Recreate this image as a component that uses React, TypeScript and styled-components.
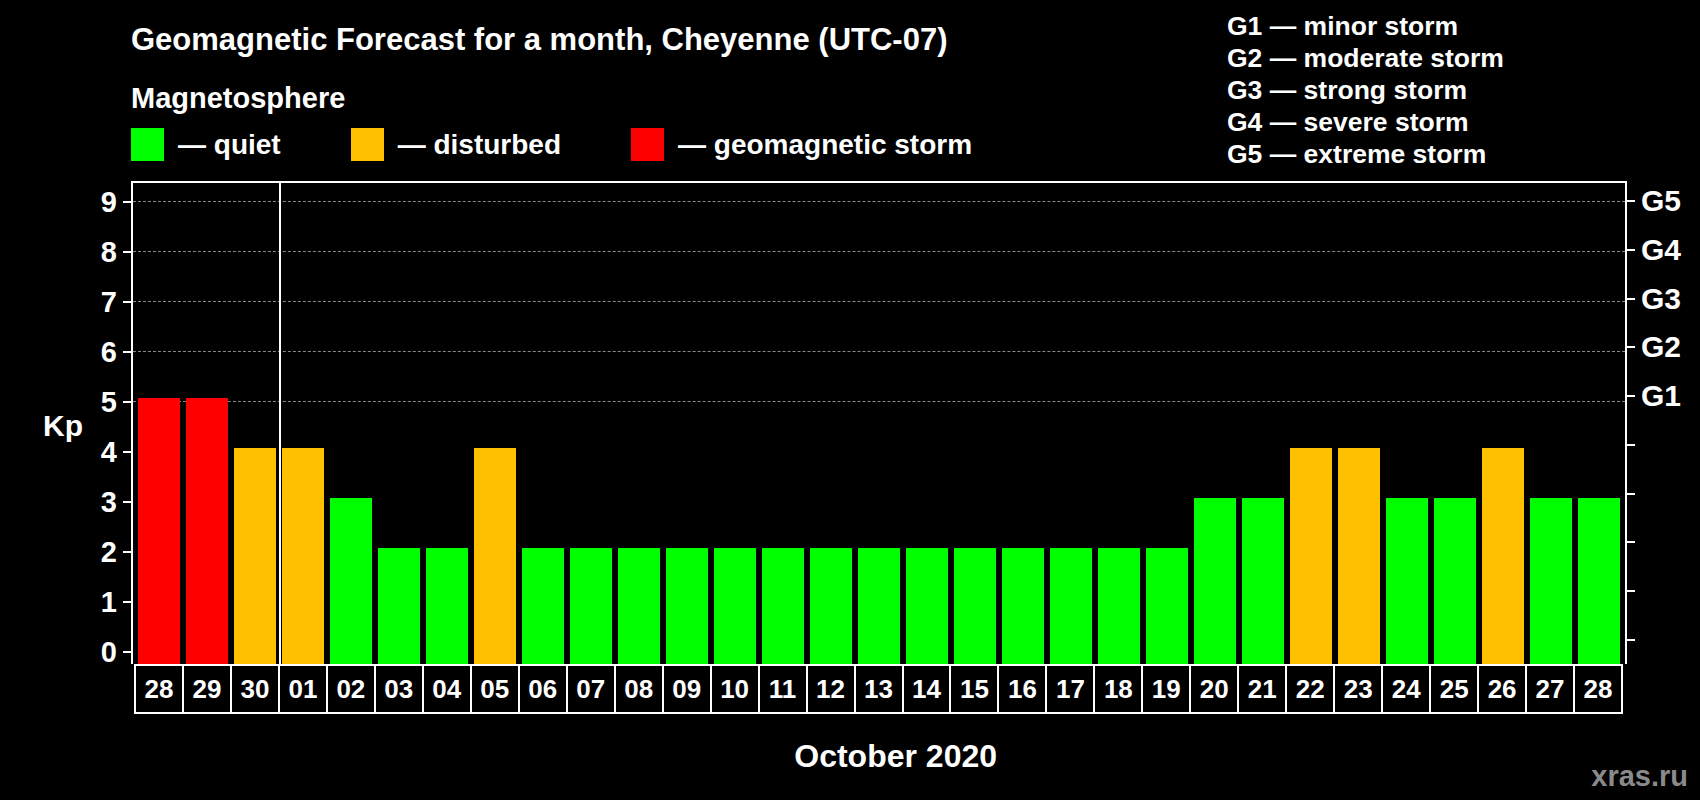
import styled, { createGlobalStyle } from "styled-components";

const GlobalStyle = createGlobalStyle`
  body {
    margin: 0;
    background: #000;
    font-family: "Liberation Sans", Arial, sans-serif;
    font-weight: 700;
    color: #fff;
  }
`;

const UNIT = 50;
const data: [string, number][] = [
  ["28", 5], ["29", 5], ["30", 4], ["01", 4], ["02", 3], ["03", 2], ["04", 2], ["05", 4],
  ["06", 2], ["07", 2], ["08", 2], ["09", 2], ["10", 2], ["11", 2], ["12", 2], ["13", 2],
  ["14", 2], ["15", 2], ["16", 2], ["17", 2], ["18", 2], ["19", 2], ["20", 3], ["21", 3],
  ["22", 4], ["23", 4], ["24", 3], ["25", 3], ["26", 4], ["27", 3], ["28", 3],
];

const colorFor = (kp: number) => (kp >= 5 ? "#ff0000" : kp === 4 ? "#ffc000" : "#00ff00");

const App = () => (
  <>
    <GlobalStyle />
    <Page>
      <Header>
        <HeadLeft>
          <Title>Geomagnetic Forecast for a month, Cheyenne (UTC-07)</Title>
          <Sub>Magnetosphere</Sub>
          <Legend>
            <LegendItem><Swatch $c="#00ff00" />— quiet</LegendItem>
            <LegendItem><Swatch $c="#ffc000" />— disturbed</LegendItem>
            <LegendItem><Swatch $c="#ff0000" />— geomagnetic storm</LegendItem>
          </Legend>
        </HeadLeft>
        <GList>
          <span>G1 — minor storm</span>
          <span>G2 — moderate storm</span>
          <span>G3 — strong storm</span>
          <span>G4 — severe storm</span>
          <span>G5 — extreme storm</span>
        </GList>
      </Header>
      <ChartRow>
        <LeftAxis>
          <KpLabel>Kp</KpLabel>
          <Ticks>
            {[9, 8, 7, 6, 5, 4, 3, 2, 1, 0].map((n) => (
              <TickRow key={n}><span>{n}</span><TickMark /></TickRow>
            ))}
          </Ticks>
        </LeftAxis>
        <Plot>
          <GridLayer>
            {[9, 8, 7, 6, 5].map((n) => (
              <GridLine key={n} style={{ top: 18 + (9 - n) * UNIT }} />
            ))}
          </GridLayer>
          <Divider />
          <Bars>
            {data.map(([d, kp], i) => (
              <Bar key={i} $c={colorFor(kp)} style={{ height: 16 + kp * UNIT }} />
            ))}
          </Bars>
        </Plot>
        <RightAxis>
          {["G5", "G4", "G3", "G2", "G1", "", "", "", "", ""].map((g, i) => (
            <TickRow key={i}><TickMark /><span>{g}</span></TickRow>
          ))}
        </RightAxis>
      </ChartRow>
      <Dates>
        {data.map(([d], i) => (
          <DateCell key={i}>{d}</DateCell>
        ))}
      </Dates>
      <Footer>
        <Month>October 2020</Month>
        <Brand>xras.ru</Brand>
      </Footer>
    </Page>
  </>
);

const Page = styled.div`
  width: 1700px;
  height: 800px;
  overflow: hidden;
  background: #000;
`;

const Header = styled.div`
  height: 181px;
  display: flex;
  justify-content: space-between;
  padding-left: 131px;
  box-sizing: border-box;
`;

const HeadLeft = styled.div`
  display: flex;
  flex-direction: column;
  padding-top: 22px;
`;

const Title = styled.div`
  font-size: 31px;
  line-height: 36px;
`;

const Sub = styled.div`
  font-size: 29px;
  line-height: 32px;
  margin-top: 24px;
`;

const Legend = styled.div`
  display: flex;
  gap: 70px;
  margin-top: 14px;
`;

const LegendItem = styled.div`
  display: flex;
  align-items: center;
  gap: 14px;
  font-size: 28px;
`;

const Swatch = styled.div<{ $c: string }>`
  width: 33px;
  height: 33px;
  background: ${(p) => p.$c};
`;

const GList = styled.div`
  width: 473px;
  display: flex;
  flex-direction: column;
  padding-top: 10px;
  font-size: 26.5px;
  line-height: 32px;
`;

const ChartRow = styled.div`
  display: flex;
  height: 483px;
`;

const LeftAxis = styled.div`
  width: 131px;
  display: flex;
  align-items: flex-start;
`;

const KpLabel = styled.div`
  font-size: 30px;
  margin-top: 228px;
  margin-left: 43px;
  width: 55px;
`;

const Ticks = styled.div`
  display: flex;
  flex-direction: column;
  padding-top: 3px;
  flex: 1;
  align-items: flex-end;
`;

const TickRow = styled.div`
  height: ${UNIT}px;
  display: flex;
  align-items: center;
  gap: 6px;
  font-size: 29px;
  &:first-child { margin-top: -7px; }
`;

const TickMark = styled.div`
  width: 8px;
  height: 2px;
  background: #fff;
`;

const Plot = styled.div`
  width: 1496px;
  box-sizing: border-box;
  border: 2px solid #fff;
  border-bottom: none;
  position: relative;
`;

const GridLayer = styled.div`
  position: absolute;
  inset: 0;
`;

const GridLine = styled.div`
  position: absolute;
  left: 0;
  right: 0;
  border-top: 1px dashed #888;
`;

const Divider = styled.div`
  position: absolute;
  left: 146px;
  top: 0;
  bottom: 0;
  width: 2px;
  background: #fff;
`;

const Bars = styled.div`
  position: absolute;
  inset: 0;
  display: flex;
  align-items: flex-end;
  gap: 6px;
  padding-left: 5px;
`;

const Bar = styled.div<{ $c: string }>`
  width: 42px;
  flex: none;
  background: ${(p) => p.$c};
  position: relative;
  z-index: 1;
`;

const RightAxis = styled.div`
  display: flex;
  flex-direction: column;
  padding-top: 3px;
  font-size: 30px;
  & > div { font-size: 30px; }
`;

const Dates = styled.div`
  display: flex;
  margin-left: 134px;
  width: 1489px;
  height: 50px;
  border-top: 2px solid #fff;
  border-bottom: 2px solid #fff;
  border-left: 2px solid #fff;
  box-sizing: border-box;
`;

const DateCell = styled.div`
  flex: 1;
  border-right: 2px solid #fff;
  display: flex;
  align-items: center;
  justify-content: center;
  font-size: 26px;
`;

const Footer = styled.div`
  display: flex;
  align-items: flex-start;
  padding-top: 24px;
`;

const Month = styled.div`
  flex: 1;
  font-size: 32px;
  text-align: center;
  padding-left: 200px;
`;

const Brand = styled.div`
  color: #8a8a8a;
  font-size: 29px;
  padding: 22px 12px 0 0;
`;

export default App;
